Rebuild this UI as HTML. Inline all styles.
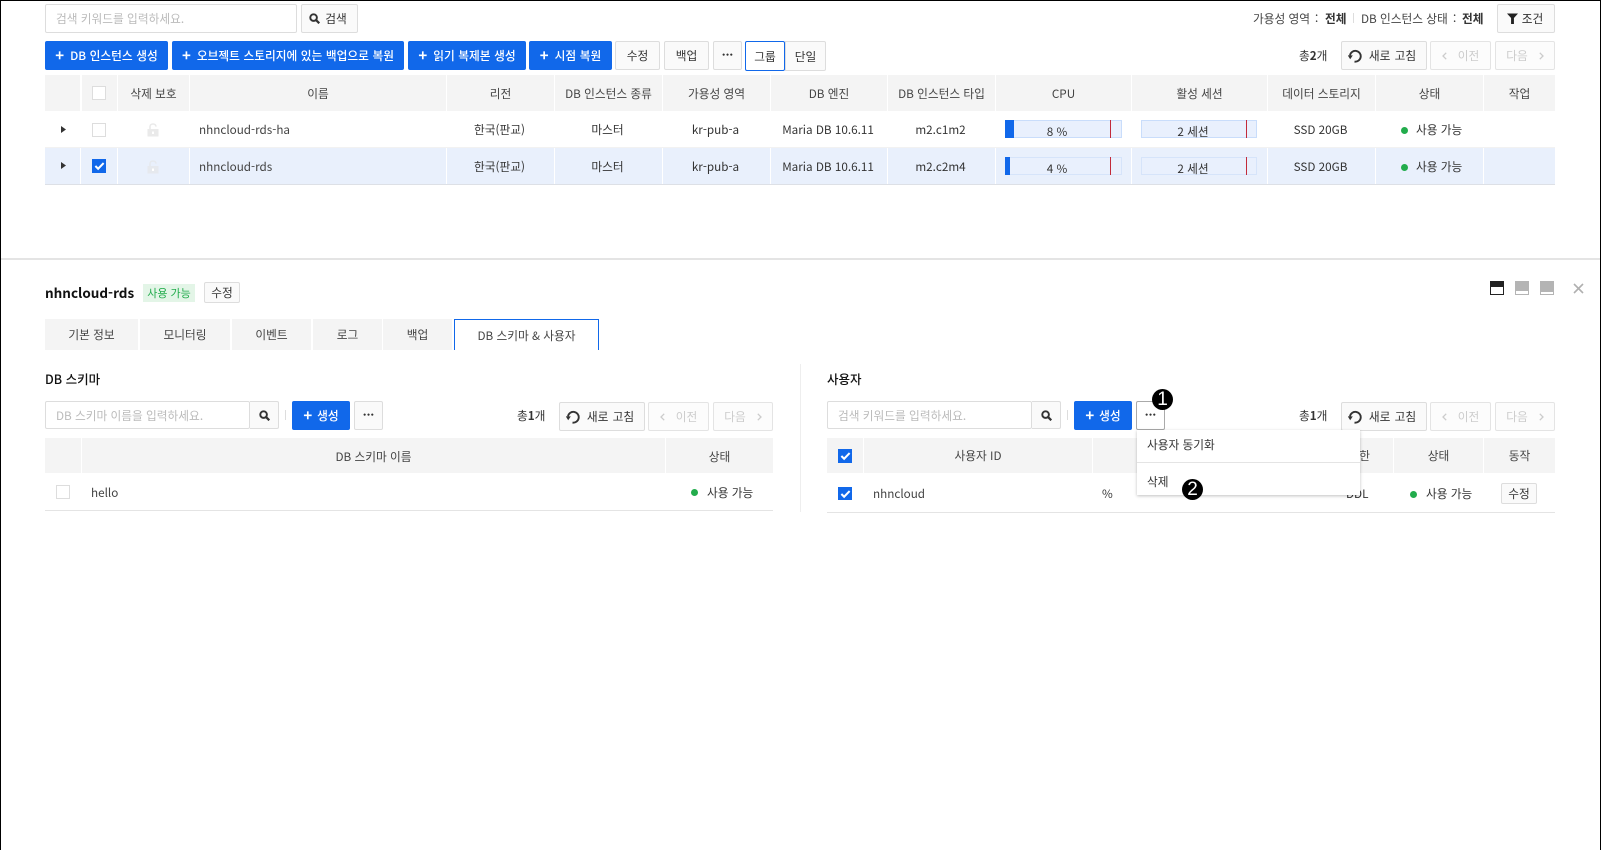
<!DOCTYPE html>
<html lang="ko"><head><meta charset="utf-8"><title>DB</title>
<style>
*{box-sizing:border-box}
html,body{margin:0;padding:0;background:#fff}
body{width:1601px;height:850px;position:relative;overflow:hidden;font-family:"Noto Sans CJK KR","Liberation Sans",sans-serif;font-size:11.7px;color:#333}
.a,.t,.btn,.p,.in,.cb,.dot{position:absolute}
.t{white-space:nowrap;line-height:18px;height:18px}
.c{text-align:center}
.btn{background:#fafafa;border:1px solid #ddd;border-radius:2px;text-align:center;white-space:nowrap;color:#333;display:flex;align-items:center;justify-content:center}
.p{background:#1168ea;border-radius:2px;color:#fff;font-weight:500;white-space:nowrap;display:flex;align-items:center;justify-content:center;word-spacing:.3px}
.p i{font-style:normal;font-weight:700;font-size:15px;margin-right:6px;line-height:1}
.dis{color:#ccc;background:#fcfcfc;border-color:#e4e4e4}
.in{background:#fff;border:1px solid #ddd;border-radius:2px;color:#bbb;padding-left:10px;display:flex;align-items:center;white-space:nowrap}
.th{position:absolute;background:#f4f4f4;text-align:center;display:flex;align-items:center;justify-content:center;white-space:nowrap;color:#444}
.cb{width:14px;height:14px;background:#fff;border:1px solid #ddd}
.cb.on{background:#1168ea;border-color:#1168ea}
.cb.on svg{position:absolute;left:1px;top:1px}
.dot{width:7px;height:7px;border-radius:50%;background:#22ac4c}
.bar{position:absolute;height:18px;background:#e9f0fd;border:1px solid #c9ddfb}
.sep{position:absolute;width:1px;background:#fff}
.badge{position:absolute;width:21px;height:21px;border-radius:50%;background:#000;color:#fff;text-align:center;line-height:21px;font-size:19px;font-family:"Liberation Sans",sans-serif}
.tab{position:absolute;top:319px;height:31px;background:#f4f4f4;display:flex;align-items:center;justify-content:center;white-space:nowrap;color:#444}
.rf{padding-right:4px;word-spacing:1px}
.h{font-size:12.5px;font-weight:500;color:#111}
svg{display:block}
</style></head><body>
<svg width="0" height="0" style="position:absolute"><defs>
<symbol id="s" viewBox="0 0 12 12"><circle cx="5" cy="5" r="3.6" fill="none" stroke="currentColor" stroke-width="2.1"/><path d="M7.5 7.5L11.2 11.2" stroke="currentColor" stroke-width="2.5"/></symbol>
<symbol id="r" viewBox="0 0 14 14"><path d="M6.5 12.6A5.4 5.4 0 1 0 2 6.4" fill="none" stroke="currentColor" stroke-width="1.9"/><path d="M-.2 6.4H4.8L2.2 10.2Z" fill="currentColor"/></symbol>
<symbol id="k" viewBox="0 0 12 10"><path d="M1.5 5L4.5 8L10.5 1.8" fill="none" stroke="#fff" stroke-width="2.2"/></symbol>
<symbol id="l" viewBox="0 0 12 14"><path d="M3 6V3.6C3 2 4.2 1 6 1S9 2 9 3.6" fill="none" stroke="currentColor" stroke-width="1.6"/><path d="M0.5 6H11.5V13.5H0.5Z" fill="currentColor"/><rect x="5" y="8.5" width="2" height="2.5" fill="#fff"/></symbol>
<symbol id="cl" viewBox="0 0 5 8"><path d="M4.2 .8L1 4L4.2 7.2" fill="none" stroke="currentColor" stroke-width="1.3"/></symbol>
<symbol id="cr" viewBox="0 0 5 8"><path d="M.8 .8L4 4L.8 7.2" fill="none" stroke="currentColor" stroke-width="1.3"/></symbol>
</defs></svg>

<!-- page frame -->
<div class="a" style="left:0;top:0;width:1601px;height:1px;background:#000"></div>
<div class="a" style="left:0;top:0;width:1px;height:850px;background:#000"></div>
<div class="a" style="left:1600px;top:0;width:1px;height:850px;background:#000"></div>

<!-- top search -->
<div class="in" style="left:45px;top:4px;width:252px;height:29px">검색 키워드를 입력하세요.</div>
<div class="btn" style="left:301px;top:4px;width:57px;height:29px;padding-right:3px"><svg width="11" height="11" style="color:#333;margin-right:5px"><use href="#s"/></svg>검색</div>
<div class="t" style="left:1253px;top:10px;color:#444">가용성 영역</div>
<div class="t" style="left:1315px;top:10px;color:#444">:</div>
<div class="t" style="left:1325px;top:10px;font-weight:700">전체</div>
<div class="a" style="left:1353px;top:13px;width:1px;height:10px;background:#ddd"></div>
<div class="t" style="left:1361px;top:10px;color:#444">DB 인스턴스 상태</div>
<div class="t" style="left:1453px;top:10px;color:#444">:</div>
<div class="t" style="left:1462px;top:10px;font-weight:700">전체</div>
<div class="btn" style="left:1497px;top:4px;width:58px;height:29px;padding-right:2px"><svg width="11" height="11" viewBox="0 0 10 10" style="margin-right:4px"><path d="M0 .5H10L6.3 4.6V10H3.7V4.6Z" fill="#222"/></svg>조건</div>

<!-- toolbar -->
<div class="p" style="left:45px;top:41px;width:123px;height:29px"><i>+</i>DB 인스턴스 생성</div>
<div class="p" style="left:172px;top:41px;width:232px;height:29px"><i>+</i>오브젝트 스토리지에 있는 백업으로 복원</div>
<div class="p" style="left:408px;top:41px;width:118px;height:29px"><i>+</i>읽기 복제본 생성</div>
<div class="p" style="left:529px;top:41px;width:83px;height:29px"><i>+</i>시점 복원</div>
<div class="btn" style="left:615px;top:41px;width:45px;height:29px">수정</div>
<div class="btn" style="left:664px;top:41px;width:45px;height:29px">백업</div>
<div class="btn" style="left:713px;top:41px;width:29px;height:29px;font-weight:700;padding-bottom:2px">···</div>
<div class="btn" style="left:785px;top:41px;width:41px;height:30px;border-radius:0 2px 2px 0">단일</div>
<div class="btn" style="left:745px;top:41px;width:40px;height:30px;background:#fff;border-color:#1168ea">그룹</div>
<div class="t" style="left:1299px;top:47px">총<b>2</b>개</div>
<div class="btn rf" style="left:1341px;top:41px;width:86px;height:29px"><svg width="14" height="14" style="margin-right:7px"><use href="#r"/></svg>새로 고침</div>
<div class="btn dis" style="left:1430px;top:41px;width:61px;height:29px"><svg width="5" height="8" style="margin-right:11px"><use href="#cl"/></svg>이전</div>
<div class="btn dis" style="left:1495px;top:41px;width:60px;height:29px">다음<svg width="5" height="8" style="margin-left:11px"><use href="#cr"/></svg></div>

<!-- main table -->
<div class="th" style="left:45px;top:75px;width:35px;height:36px"></div>
<div class="th" style="left:82px;top:75px;width:35px;height:36px"></div>
<div class="th" style="left:118px;top:75px;width:71px;height:36px">삭제 보호</div>
<div class="th" style="left:190px;top:75px;width:256px;height:36px">이름</div>
<div class="th" style="left:447px;top:75px;width:107px;height:36px">리전</div>
<div class="th" style="left:555px;top:75px;width:107px;height:36px">DB 인스턴스 종류</div>
<div class="th" style="left:663px;top:75px;width:107px;height:36px">가용성 영역</div>
<div class="th" style="left:771px;top:75px;width:116px;height:36px">DB 엔진</div>
<div class="th" style="left:888px;top:75px;width:107px;height:36px">DB 인스턴스 타입</div>
<div class="th" style="left:996px;top:75px;width:135px;height:36px">CPU</div>
<div class="th" style="left:1132px;top:75px;width:135px;height:36px">활성 세션</div>
<div class="th" style="left:1268px;top:75px;width:107px;height:36px">데이터 스토리지</div>
<div class="th" style="left:1376px;top:75px;width:107px;height:36px">상태</div>
<div class="th" style="left:1484px;top:75px;width:71px;height:36px">작업</div>
<div class="cb" style="left:92px;top:86px"></div>

<!-- selected row background -->
<div class="a" style="left:45px;top:147px;width:1510px;height:1px;background:#f2f2f2"></div>
<div class="a" style="left:45px;top:148px;width:1510px;height:37px;background:#e9f0fc;border-bottom:1px solid #dde0e6"></div>
<div class="sep" style="left:80px;top:148px;height:36px"></div>
<div class="sep" style="left:117px;top:148px;height:36px"></div>
<div class="sep" style="left:189px;top:148px;height:36px"></div>
<div class="sep" style="left:446px;top:148px;height:36px"></div>
<div class="sep" style="left:554px;top:148px;height:36px"></div>
<div class="sep" style="left:662px;top:148px;height:36px"></div>
<div class="sep" style="left:770px;top:148px;height:36px"></div>
<div class="sep" style="left:887px;top:148px;height:36px"></div>
<div class="sep" style="left:995px;top:148px;height:36px"></div>
<div class="sep" style="left:1131px;top:148px;height:36px"></div>
<div class="sep" style="left:1267px;top:148px;height:36px"></div>
<div class="sep" style="left:1375px;top:148px;height:36px"></div>
<div class="sep" style="left:1483px;top:148px;height:36px"></div>

<!-- row 1 -->
<svg class="a" style="left:61px;top:126px" width="5" height="7" viewBox="0 0 5 7"><path d="M0 0L5 3.5L0 7Z" fill="#333"/></svg>
<div class="cb" style="left:92px;top:123px"></div>
<svg class="a" style="left:147px;top:123px;color:#eaeaea" width="12" height="14"><use href="#l"/></svg>
<div class="t" style="left:199px;top:121px;color:#444">nhncloud-rds-ha</div>
<div class="t c" style="left:446px;width:107px;top:121px">한국(판교)</div>
<div class="t c" style="left:554px;width:107px;top:121px">마스터</div>
<div class="t c" style="left:662px;width:107px;top:121px">kr-pub-a</div>
<div class="t c" style="left:770px;width:116px;top:121px">Maria DB 10.6.11</div>
<div class="t c" style="left:887px;width:107px;top:121px">m2.c1m2</div>
<div class="bar" style="left:1005px;top:120px;width:117px"></div>
<div class="a" style="left:1005px;top:120px;width:9px;height:18px;background:#1168ea"></div>
<div class="a" style="left:1110px;top:120px;width:1px;height:18px;background:#c22a3a"></div>
<div class="t c" style="left:1037px;width:40px;top:123px">8 %</div>
<div class="bar" style="left:1141px;top:120px;width:116px"></div>
<div class="a" style="left:1246px;top:120px;width:1px;height:18px;background:#c22a3a"></div>
<div class="t c" style="left:1163px;width:60px;top:123px">2 세션</div>
<div class="t c" style="left:1267px;width:107px;top:121px">SSD 20GB</div>
<div class="dot" style="left:1401px;top:127px"></div>
<div class="t" style="left:1416px;top:121px">사용 가능</div>

<!-- row 2 -->
<svg class="a" style="left:61px;top:162px" width="5" height="7" viewBox="0 0 5 7"><path d="M0 0L5 3.5L0 7Z" fill="#333"/></svg>
<div class="cb on" style="left:92px;top:159px"><svg width="11" height="10"><use href="#k"/></svg></div>
<svg class="a" style="left:147px;top:160px;color:#e6e9ee" width="12" height="14"><use href="#l"/></svg>
<div class="t" style="left:199px;top:158px;color:#444">nhncloud-rds</div>
<div class="t c" style="left:446px;width:107px;top:158px">한국(판교)</div>
<div class="t c" style="left:554px;width:107px;top:158px">마스터</div>
<div class="t c" style="left:662px;width:107px;top:158px">kr-pub-a</div>
<div class="t c" style="left:770px;width:116px;top:158px">Maria DB 10.6.11</div>
<div class="t c" style="left:887px;width:107px;top:158px">m2.c2m4</div>
<div class="bar" style="left:1005px;top:157px;width:117px;border-color:#d6e4fa"></div>
<div class="a" style="left:1005px;top:157px;width:5px;height:18px;background:#1168ea"></div>
<div class="a" style="left:1110px;top:157px;width:1px;height:18px;background:#c22a3a"></div>
<div class="t c" style="left:1037px;width:40px;top:160px">4 %</div>
<div class="bar" style="left:1141px;top:157px;width:116px;border-color:#d6e4fa"></div>
<div class="a" style="left:1246px;top:157px;width:1px;height:18px;background:#c22a3a"></div>
<div class="t c" style="left:1163px;width:60px;top:160px">2 세션</div>
<div class="t c" style="left:1267px;width:107px;top:158px">SSD 20GB</div>
<div class="dot" style="left:1401px;top:164px"></div>
<div class="t" style="left:1416px;top:158px">사용 가능</div>

<!-- divider -->
<div class="a" style="left:1px;top:258px;width:1599px;height:2px;background:#e4e4e4"></div>

<!-- detail header -->
<div class="t" style="left:45px;top:282px;font-size:13.5px;font-weight:700;line-height:20px;height:20px;color:#111">nhncloud-rds</div>
<div class="a" style="left:143px;top:284px;width:52px;height:18px;background:#e3f5e7;color:#22ac4c;text-align:center;line-height:18px;font-size:11px">사용 가능</div>
<div class="btn" style="left:204px;top:282px;width:36px;height:21px">수정</div>
<div class="a" style="left:1490px;top:281px;width:14px;height:14px;background:#222"><div class="a" style="left:1px;top:6px;width:12px;height:7px;background:#fff"></div></div>
<div class="a" style="left:1515px;top:281px;width:14px;height:14px;background:#b4b4b4"><div class="a" style="left:1px;top:10px;width:12px;height:3px;background:#fff"></div></div>
<div class="a" style="left:1540px;top:281px;width:14px;height:14px;background:#b4b4b4"><div class="a" style="left:1px;top:11px;width:12px;height:2px;background:#fff"></div></div>
<svg class="a" style="left:1573px;top:283px" width="11" height="11" viewBox="0 0 11 11"><path d="M1 1L10 10M10 1L1 10" stroke="#b0b0b0" stroke-width="1.6"/></svg>

<!-- tabs -->
<div class="tab" style="left:45px;width:93px">기본 정보</div>
<div class="tab" style="left:140px;width:90px">모니터링</div>
<div class="tab" style="left:232px;width:79px">이벤트</div>
<div class="tab" style="left:313px;width:69px">로그</div>
<div class="tab" style="left:383px;width:69px">백업</div>
<div class="tab" style="left:454px;width:145px;background:#fff;border:1px solid #1168ea;border-bottom:0">DB 스키마 &amp; 사용자</div>

<div class="a" style="left:800px;top:364px;width:1px;height:148px;background:#eee"></div>

<!-- left panel -->
<div class="t h" style="left:45px;top:370px">DB 스키마</div>
<div class="in" style="left:45px;top:401px;width:205px;height:28px">DB 스키마 이름을 입력하세요.</div>
<div class="btn" style="left:250px;top:401px;width:29px;height:28px;border-left:0;border-radius:0 2px 2px 0"><svg width="11" height="11"><use href="#s"/></svg></div>
<div class="a" style="left:285px;top:410px;width:1px;height:10px;background:#ddd"></div>
<div class="p" style="left:292px;top:401px;width:58px;height:29px"><i style="margin-right:5px">+</i>생성</div>
<div class="btn" style="left:354px;top:401px;width:29px;height:29px;font-weight:700;padding-bottom:2px">···</div>
<div class="t" style="left:517px;top:407px">총<b>1</b>개</div>
<div class="btn rf" style="left:559px;top:402px;width:86px;height:29px"><svg width="14" height="14" style="margin-right:7px"><use href="#r"/></svg>새로 고침</div>
<div class="btn dis" style="left:648px;top:402px;width:61px;height:29px"><svg width="5" height="8" style="margin-right:11px"><use href="#cl"/></svg>이전</div>
<div class="btn dis" style="left:713px;top:402px;width:60px;height:29px">다음<svg width="5" height="8" style="margin-left:11px"><use href="#cr"/></svg></div>
<div class="th" style="left:45px;top:438px;width:36px;height:35px"></div>
<div class="th" style="left:82px;top:438px;width:583px;height:35px;padding-top:1px">DB 스키마 이름</div>
<div class="th" style="left:666px;top:438px;width:107px;height:35px;padding-top:1px">상태</div>
<div class="cb" style="left:56px;top:485px"></div>
<div class="t" style="left:91px;top:484px;color:#444">hello</div>
<div class="dot" style="left:691px;top:489px"></div>
<div class="t" style="left:707px;top:484px">사용 가능</div>
<div class="a" style="left:45px;top:510px;width:728px;height:1px;background:#e4e4e4"></div>

<!-- right panel -->
<div class="t h" style="left:827px;top:370px">사용자</div>
<div class="in" style="left:827px;top:401px;width:205px;height:28px">검색 키워드를 입력하세요.</div>
<div class="btn" style="left:1032px;top:401px;width:29px;height:28px;border-left:0;border-radius:0 2px 2px 0"><svg width="11" height="11"><use href="#s"/></svg></div>
<div class="a" style="left:1067px;top:410px;width:1px;height:10px;background:#ddd"></div>
<div class="p" style="left:1074px;top:401px;width:58px;height:29px"><i style="margin-right:5px">+</i>생성</div>
<div class="btn" style="left:1136px;top:401px;width:29px;height:29px;font-weight:700;padding-bottom:2px;border-color:#aaa;background:#fff">···</div>
<div class="t" style="left:1299px;top:407px">총<b>1</b>개</div>
<div class="btn rf" style="left:1341px;top:402px;width:86px;height:29px"><svg width="14" height="14" style="margin-right:7px"><use href="#r"/></svg>새로 고침</div>
<div class="btn dis" style="left:1430px;top:402px;width:61px;height:29px"><svg width="5" height="8" style="margin-right:11px"><use href="#cl"/></svg>이전</div>
<div class="btn dis" style="left:1495px;top:402px;width:60px;height:29px">다음<svg width="5" height="8" style="margin-left:11px"><use href="#cr"/></svg></div>
<div class="th" style="left:827px;top:438px;width:36px;height:35px"></div>
<div class="th" style="left:864px;top:438px;width:228px;height:35px">사용자 ID</div>
<div class="th" style="left:1093px;top:438px;width:300px;height:35px;justify-content:flex-end;padding-right:23px">권한</div>
<div class="th" style="left:1394px;top:438px;width:89px;height:35px">상태</div>
<div class="th" style="left:1484px;top:438px;width:71px;height:35px">동작</div>
<div class="cb on" style="left:838px;top:449px"><svg width="11" height="10"><use href="#k"/></svg></div>
<div class="cb on" style="left:838px;top:487px;height:13px"><svg width="11" height="10"><use href="#k"/></svg></div>
<div class="t" style="left:873px;top:485px;color:#444">nhncloud</div>
<div class="t" style="left:1102px;top:485px">%</div>
<div class="t" style="left:1346px;top:485px">DDL</div>
<div class="dot" style="left:1410px;top:491px"></div>
<div class="t" style="left:1426px;top:485px">사용 가능</div>
<div class="btn" style="left:1501px;top:483px;width:36px;height:21px">수정</div>
<div class="a" style="left:827px;top:512px;width:728px;height:1px;background:#e4e4e4"></div>

<!-- dropdown -->
<div class="a" style="left:1137px;top:430px;width:223px;height:65px;background:#fff;box-shadow:0 1px 3px rgba(0,0,0,.25)"></div>
<div class="a" style="left:1137px;top:462px;width:223px;height:1px;background:#e4e4e4"></div>
<div class="t" style="left:1147px;top:436px">사용자 동기화</div>
<div class="t" style="left:1147px;top:473px">삭제</div>

<div class="badge" style="left:1152px;top:389px">1</div>
<div class="badge" style="left:1182px;top:479px">2</div>
</body></html>
